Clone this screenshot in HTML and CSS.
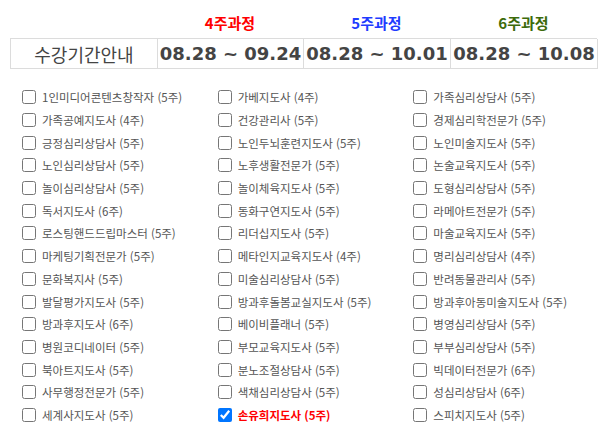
FILE: index.html
```html
<!DOCTYPE html>
<html lang="ko">
<head>
<meta charset="utf-8">
<link rel="stylesheet" href="styles.css">
</head>
<body>
<div class="wrap">
  <div class="period">
    <div class="head-row">
      <div class="head-cell"></div>
      <div class="head-cell c4">4주과정</div>
      <div class="head-cell c5">5주과정</div>
      <div class="head-cell c6">6주과정</div>
    </div>
    <div class="date-row">
      <div class="cell title">수강기간안내</div>
      <div class="cell date">08.28 ~ 09.24</div>
      <div class="cell date">08.28 ~ 10.01</div>
      <div class="cell date">08.28 ~ 10.08</div>
    </div>
  </div>
  <ul class="courses">
    <li><label><input type="checkbox"><span>1인미디어콘텐츠창작자 (5주)</span></label></li>
    <li><label><input type="checkbox"><span>가베지도사 (4주)</span></label></li>
    <li><label><input type="checkbox"><span>가족심리상담사 (5주)</span></label></li>
    <li><label><input type="checkbox"><span>가족공예지도사 (4주)</span></label></li>
    <li><label><input type="checkbox"><span>건강관리사 (5주)</span></label></li>
    <li><label><input type="checkbox"><span>경제심리학전문가 (5주)</span></label></li>
    <li><label><input type="checkbox"><span>긍정심리상담사 (5주)</span></label></li>
    <li><label><input type="checkbox"><span>노인두뇌훈련지도사 (5주)</span></label></li>
    <li><label><input type="checkbox"><span>노인미술지도사 (5주)</span></label></li>
    <li><label><input type="checkbox"><span>노인심리상담사 (5주)</span></label></li>
    <li><label><input type="checkbox"><span>노후생활전문가 (5주)</span></label></li>
    <li><label><input type="checkbox"><span>논술교육지도사 (5주)</span></label></li>
    <li><label><input type="checkbox"><span>놀이심리상담사 (5주)</span></label></li>
    <li><label><input type="checkbox"><span>놀이체육지도사 (5주)</span></label></li>
    <li><label><input type="checkbox"><span>도형심리상담사 (5주)</span></label></li>
    <li><label><input type="checkbox"><span>독서지도사 (6주)</span></label></li>
    <li><label><input type="checkbox"><span>동화구연지도사 (5주)</span></label></li>
    <li><label><input type="checkbox"><span>라메아트전문가 (5주)</span></label></li>
    <li><label><input type="checkbox"><span>로스팅핸드드립마스터 (5주)</span></label></li>
    <li><label><input type="checkbox"><span>리더십지도사 (5주)</span></label></li>
    <li><label><input type="checkbox"><span>마술교육지도사 (5주)</span></label></li>
    <li><label><input type="checkbox"><span>마케팅기획전문가 (5주)</span></label></li>
    <li><label><input type="checkbox"><span>메타인지교육지도사 (4주)</span></label></li>
    <li><label><input type="checkbox"><span>명리심리상담사 (4주)</span></label></li>
    <li><label><input type="checkbox"><span>문화복지사 (5주)</span></label></li>
    <li><label><input type="checkbox"><span>미술심리상담사 (5주)</span></label></li>
    <li><label><input type="checkbox"><span>반려동물관리사 (5주)</span></label></li>
    <li><label><input type="checkbox"><span>발달평가지도사 (5주)</span></label></li>
    <li><label><input type="checkbox"><span>방과후돌봄교실지도사 (5주)</span></label></li>
    <li><label><input type="checkbox"><span>방과후아동미술지도사 (5주)</span></label></li>
    <li><label><input type="checkbox"><span>방과후지도사 (6주)</span></label></li>
    <li><label><input type="checkbox"><span>베이비플래너 (5주)</span></label></li>
    <li><label><input type="checkbox"><span>병영심리상담사 (5주)</span></label></li>
    <li><label><input type="checkbox"><span>병원코디네이터 (5주)</span></label></li>
    <li><label><input type="checkbox"><span>부모교육지도사 (5주)</span></label></li>
    <li><label><input type="checkbox"><span>부부심리상담사 (5주)</span></label></li>
    <li><label><input type="checkbox"><span>북아트지도사 (5주)</span></label></li>
    <li><label><input type="checkbox"><span>분노조절상담사 (5주)</span></label></li>
    <li><label><input type="checkbox"><span>빅데이터전문가 (6주)</span></label></li>
    <li><label><input type="checkbox"><span>사무행정전문가 (5주)</span></label></li>
    <li><label><input type="checkbox"><span>색채심리상담사 (5주)</span></label></li>
    <li><label><input type="checkbox"><span>성심리상담사 (6주)</span></label></li>
    <li><label><input type="checkbox"><span>세계사지도사 (5주)</span></label></li>
    <li class="selected"><label><input type="checkbox" checked><span>손유희지도사 (5주)</span></label></li>
    <li><label><input type="checkbox"><span>스피치지도사 (5주)</span></label></li>
  </ul>
</div>
</body>
</html>
```

FILE: styles.css
```css
html, body {
  margin: 0;
  padding: 0;
  background: #fff;
}

body {
  font-family: "Noto Sans CJK KR", "Noto Sans", sans-serif;
  color: #555;
}

.wrap {
  width: 587px;
  padding: 10px 0 0 10px;
}

.head-row,
.date-row {
  display: grid;
  grid-template-columns: 147px 146px 147px 147px;
}

.head-row {
  height: 28px;
}

.head-cell {
  font-size: 15px;
  font-weight: bold;
  text-align: center;
  line-height: 25px;
}

.c4 { color: #ff0000; }
.c5 { color: #1f3cff; }
.c6 { color: #3d6b0b; }

.date-row {
  border-top: 1px solid #dcdcdc;
  border-left: 1px solid #dcdcdc;
}

.cell {
  height: 29px;
  border-right: 1px solid #dcdcdc;
  border-bottom: 1px solid #dcdcdc;
  display: flex;
  align-items: center;
  justify-content: center;
  color: #444;
  white-space: nowrap;
}

.title {
  font-size: 18px;
}

.date {
  font-family: "DejaVu Sans", sans-serif;
  font-weight: bold;
  font-size: 18px;
}

.courses {
  list-style: none;
  margin: 0;
  padding: 17px 0 0 0;
  display: grid;
  grid-template-columns: repeat(3, 1fr);
  grid-auto-rows: 22.7px;
}

.courses li {
  padding-left: 12px;
  display: flex;
  align-items: center;
}

.courses label {
  display: flex;
  align-items: center;
  font-size: 11.5px;
  white-space: nowrap;
}

.courses input {
  width: 14px;
  height: 14px;
  margin: 0 6px 0 0;
}

.courses .selected span {
  color: #ff0000;
  font-weight: bold;
}
```
